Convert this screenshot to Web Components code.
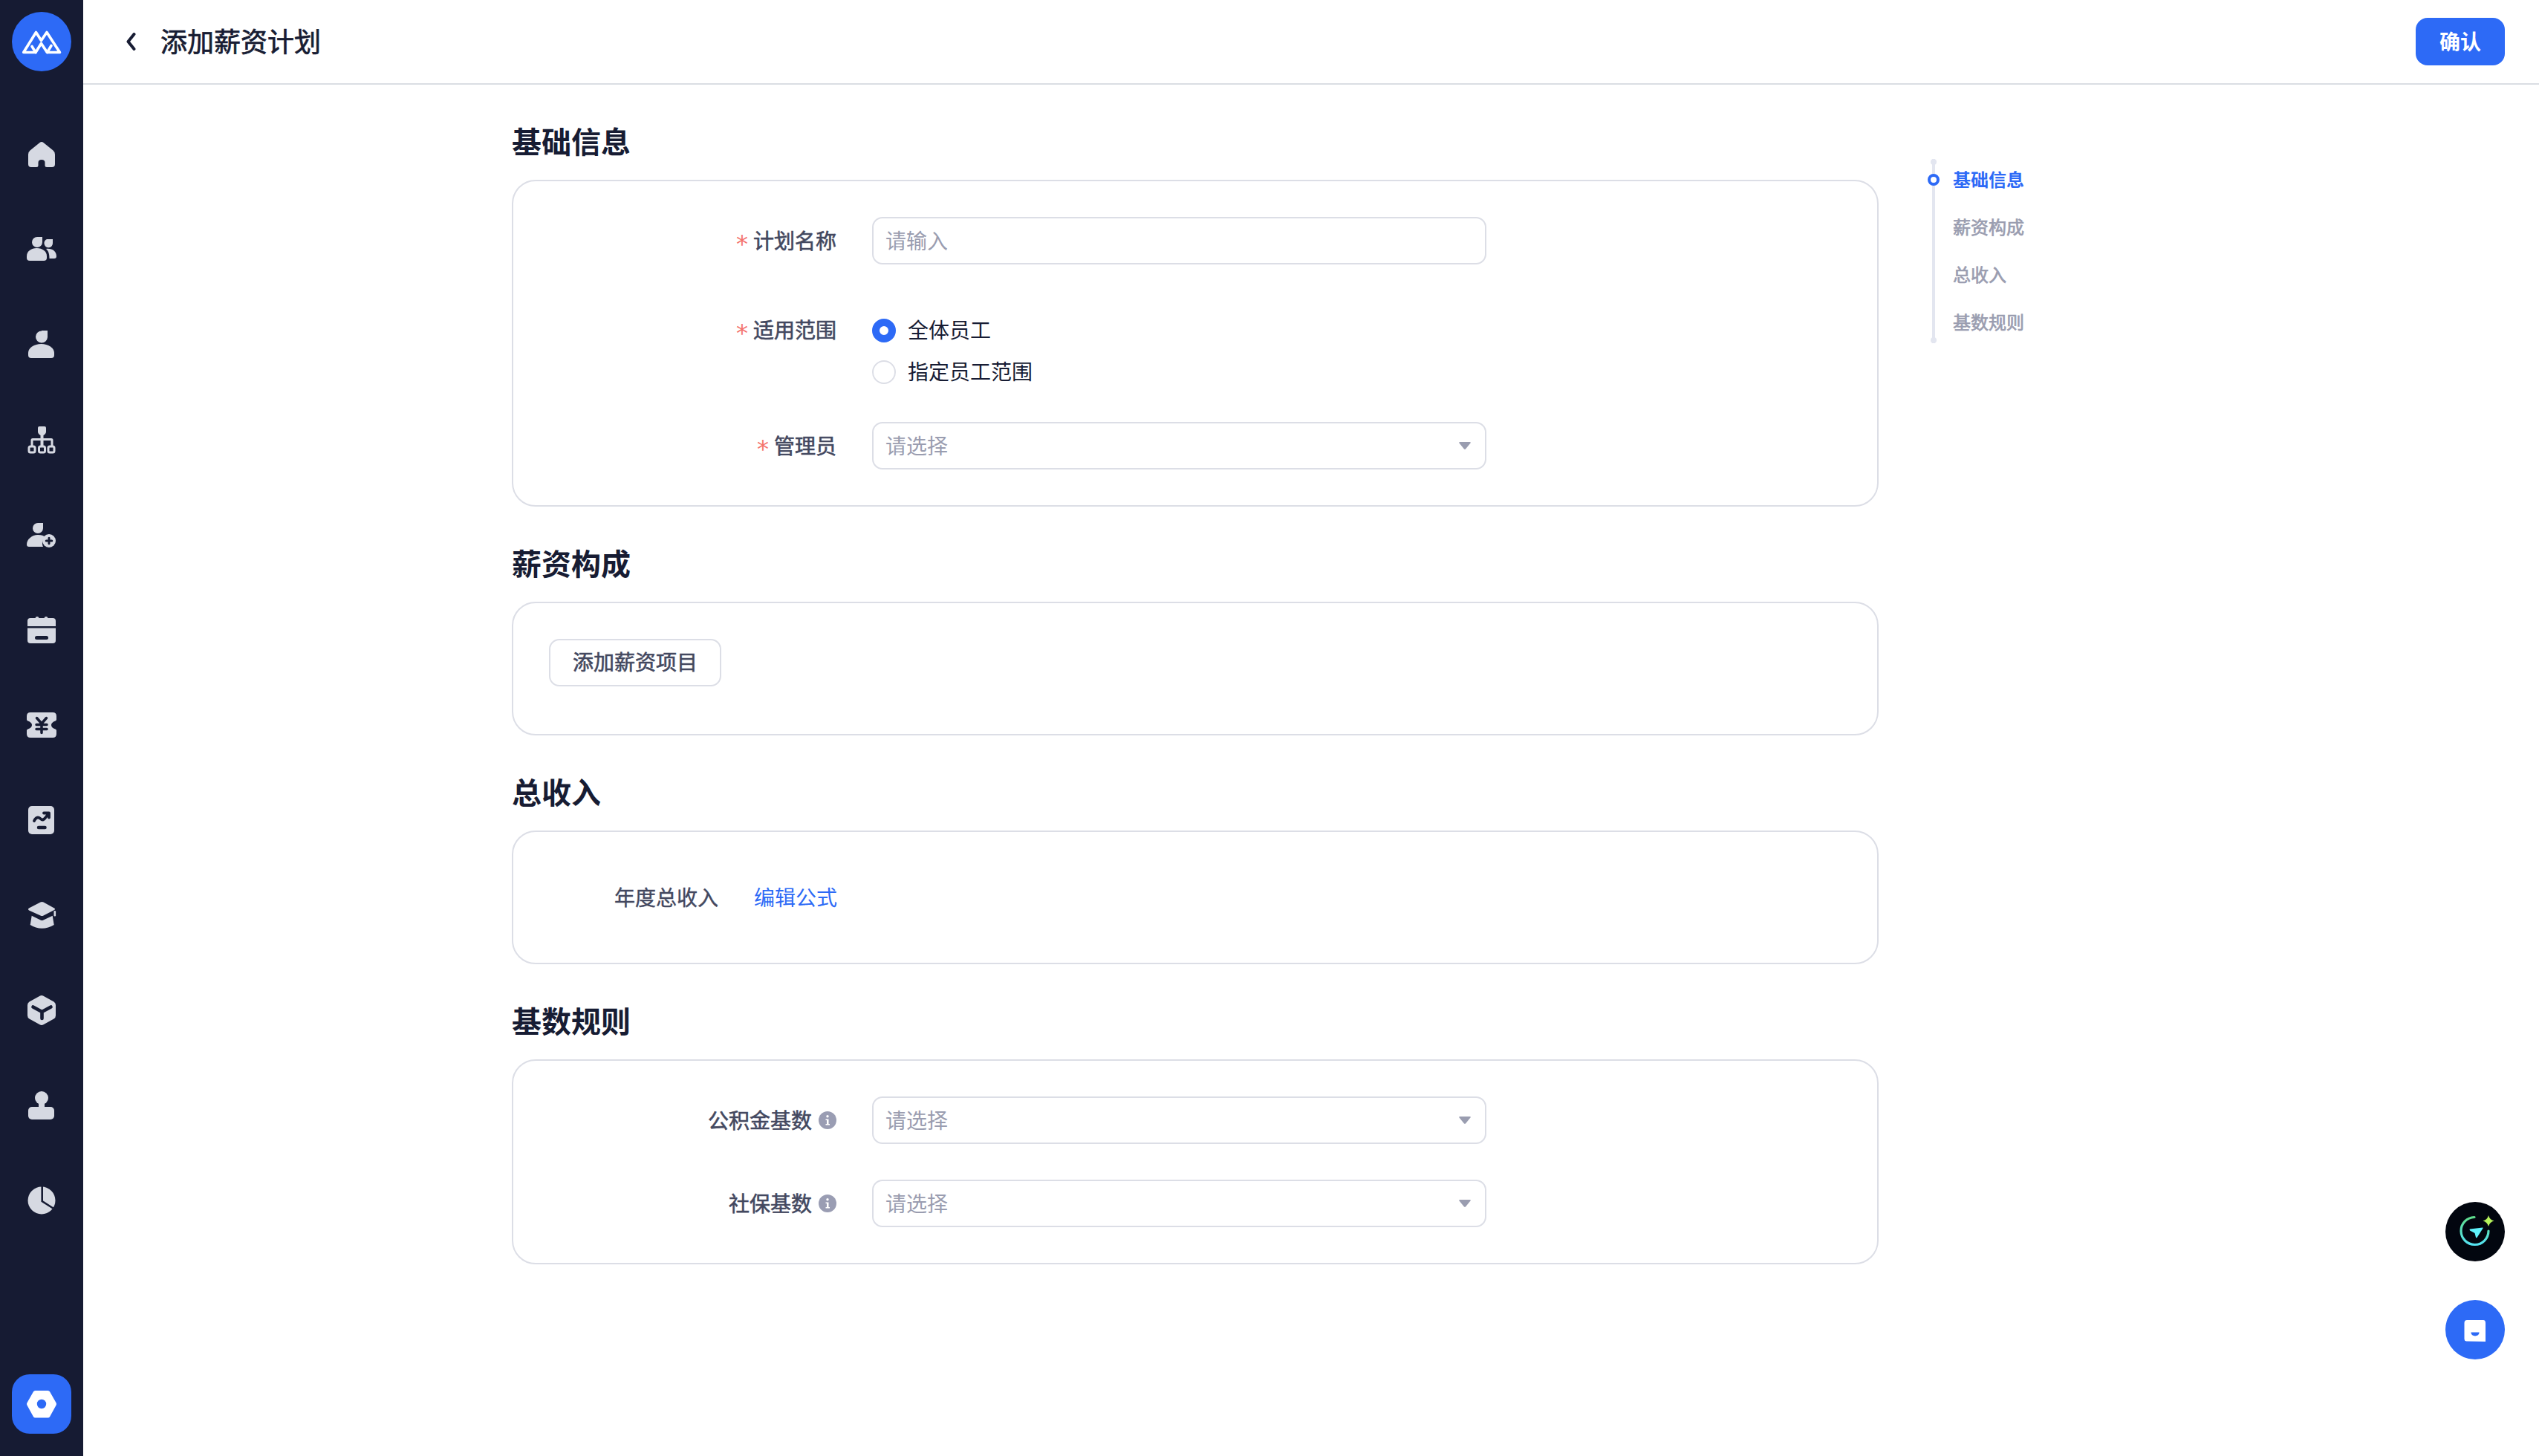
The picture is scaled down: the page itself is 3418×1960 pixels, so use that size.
<!DOCTYPE html>
<html lang="zh"><head><meta charset="utf-8"><title>添加薪资计划</title>
<style>
html,body{margin:0;height:100%;background:#fff}
body{font-family:Inter,"Noto Sans CJK SC","Noto Sans",sans-serif;color:#171c33}
app-shell{height:1960px}
</style></head><body>
<template id="nav-tpl"><style>
:host{display:flex;flex-direction:column;width:112px;height:1960px;background:#161b33;flex:none;align-items:center;box-sizing:border-box;padding-top:16px}
.logo{width:80px;height:80px;border-radius:50%;background:#2d6af6;display:block;flex:none;margin-bottom:48px}
nav{display:flex;flex-direction:column;flex:1}
.i{width:112px;height:128px;display:flex;align-items:center;justify-content:center;flex:none}
svg.ic{width:48px;height:48px;display:block;fill:#d6d9e2}
.d{stroke:#161b33;fill:none;stroke-linecap:round;stroke-linejoin:round}
.set{width:80px;height:80px;border-radius:24px;background:#2d6af6;display:flex;align-items:center;justify-content:center;margin-bottom:30px;flex:none}
</style>
<svg class="logo" viewBox="0 0 80 80" fill="none" stroke="#fff" stroke-width="3.600" stroke-linejoin="round" stroke-linecap="round"><path d="M15.700 54.500 32.500 27.500 39.500 38.500 47 27.500 64.500 54.500H47.500L39.500 42.500 32 54.500Z"/><path d="M47.500 54.500 53 45.500M32 54.500 27 46.500"/></svg>
<nav>
<div class="i"><svg class="ic" viewBox="0 0 48 48"><path d="M21.500 7.900Q24 6 26.500 7.900L39.500 18.600Q42 20.700 42 24V37Q42 41 38 41H31Q28.500 41 28.500 38.500V35Q28.500 31 24 31T19.500 35V38.500Q19.500 41 17 41H10Q6 41 6 37V24Q6 20.700 8.500 18.600Z"/></svg></div>
<div class="i"><svg class="ic" viewBox="0 0 48 48"><path d="M18 7H25V14A7 7 0 1 1 18 7Z"/><path d="M4 33C4 26 10 22 17.500 22S31 26 31 33V35Q31 39 27 39H8Q4 39 4 35Z"/><path d="M31 10H39V15A5.500 5.500 0 0 1 27.500 16 6 6 0 0 1 31 10Z"/><path d="M30 23C38 22 44 26 44 33Q44 36 41 36H34.500C34.500 30 33.500 26 30 23Z"/></svg></div>
<div class="i"><svg class="ic" viewBox="0 0 48 48"><path d="M24 5H32V14A8 8 0 1 1 24 5.500Z"/><path d="M6 35C6 28 14 23 23.500 23S41 28 41 35V38Q41 42 37 42H10Q6 42 6 38Z"/></svg></div>
<div class="i"><svg class="ic" viewBox="0 0 48 48"><path d="M21 6H28Q30 6 30 8V13Q30 16 26.500 18V22H37Q39.500 22 39.500 24.500V32H36.500V25H26.500V32H22.500V25H12.500V32H9.500V24.500Q9.500 22 12 22H22.500V18Q19 16 19 13V8Q19 6 21 6Z"/><g fill="none" stroke="#d6d9e2" stroke-width="3"><rect x="7" y="33" width="8" height="8" rx="2"/><rect x="20.500" y="33" width="8" height="8" rx="2"/><rect x="33" y="33" width="8" height="8" rx="2"/></g></svg></div>
<div class="i"><svg class="ic" viewBox="0 0 48 48"><path d="M19 8H26V15A7 7 0 1 1 19 8Z"/><path d="M4 37C4 30 11 24 19 24 24 24 27 25 28.500 27 25 30 24 35 26 40H7Q4 40 4 37Z"/><circle cx="34" cy="32" r="9"/><path class="d" stroke-width="3" d="M34 28.200V35.800M30.200 32H37.800"/></svg></div>
<div class="i"><svg class="ic" viewBox="0 0 48 48"><path d="M5 19V12Q5 8 9 8H15.500Q16 6 18 6T20.500 8H27.500Q28 6 30 6T32.500 8H39Q43 8 43 12V19Z"/><path d="M5 21.500H43V38Q43 42 39 42H9Q5 42 5 38Z"/><path class="d" stroke-width="5" d="M17.500 34.500H30.500"/></svg></div>
<div class="i"><svg class="ic" viewBox="0 0 48 48"><path d="M9 7H39Q44 7 44 12V16.500Q44 18 42.500 18.500 37 20.500 37 24T42.500 29.500Q44 30 44 31.500V36Q44 41 39 41H9Q4 41 4 36V31.500Q4 30 5.500 29.500 11 27.500 11 24T5.500 18.500Q4 18 4 16.500V12Q4 7 9 7Z"/><path class="d" stroke-width="3.500" d="M17.500 14.500 24 22 30.500 14.500M17 23.500H31M17 29.500H31M24 22V34.500"/></svg></div>
<div class="i"><svg class="ic" viewBox="0 0 48 48"><rect x="6" y="5" width="35" height="38" rx="5"/><path class="d" stroke-width="3.800" d="M14 25C16.500 19.500 20 19.500 23 22.500S28.500 22 33 15.500M27 14.500H34V20.500"/><path class="d" stroke-width="4.500" d="M20 34H28.500"/></svg></div>
<div class="i"><svg class="ic" viewBox="0 0 48 48"><path d="M22.500 6.600Q24.500 5.600 26.500 6.600L41 14.400Q43 15.600 41 17L26.500 24.500Q24.500 25.700 22.500 24.500L7 17.500Q5 16 7 14.500Z"/><path d="M10.700 24.800 22.500 30.500Q24.500 31.500 26.500 30.500L38.700 24.800 40.700 37Q33 41.700 24.500 41.700T8.700 37Z"/><rect x="40.500" y="18" width="2.600" height="7.500" rx="1.200"/></svg></div>
<div class="i"><svg class="ic" viewBox="0 0 48 48"><path d="M21.500 4.800Q24 3.400 26.500 4.800L40.500 12.500Q43 14 43 17V31Q43 34 40.500 35.500L26.500 43.200Q24 44.600 21.500 43.200L7.500 35.500Q5 34 5 31V17Q5 14 7.500 12.500Z"/><path class="d" stroke-width="4.600" d="M12.500 19.500 24.500 26 36.500 19.500M24.500 26V35"/></svg></div>
<div class="i"><svg class="ic" viewBox="0 0 48 48"><circle cx="24" cy="14" r="9"/><rect x="20" y="20" width="8" height="8"/><rect x="6" y="26" width="35" height="17" rx="5"/></svg></div>
<div class="i"><svg class="ic" viewBox="0 0 48 48"><circle cx="24" cy="24" r="18.500"/><path class="d" stroke-width="2.600" style="stroke-linecap:butt;stroke-linejoin:miter" d="M24.700 5V25L39.500 34.500"/></svg></div>
</nav>
<div class="set"><svg width="48" height="48" viewBox="0 0 48 48"><path fill="#fff" stroke="#fff" stroke-width="6" stroke-linejoin="round" d="M7 24 15.500 9H32.500L41 24 32.500 39.500H15.500Z"/><circle cx="24" cy="24" r="6.200" fill="#2d6af6"/></svg></div>
</template>

<template id="bar-tpl"><style>
:host{display:flex;align-items:center;height:114px;box-sizing:border-box;border-bottom:2px solid #dadee3;padding:0 46px 0 58px;flex:none}
svg{display:block;flex:none;margin-right:33px}
h1{font:400 36px/56px Inter,"Noto Sans CJK SC",sans-serif;-webkit-text-stroke:.7px #171c33;color:#171c33;margin:0;padding-top:1px;flex:1}
button{width:120px;height:64px;border:0;border-radius:16px;background:#2d6af6;color:#fff;font:600 28px/64px Inter,"Noto Sans CJK SC",sans-serif;padding:1px 0 0}
</style>
<svg width="13" height="24" viewBox="0 0 13 24" fill="none" stroke="#171c33" stroke-width="4" stroke-linecap="round" stroke-linejoin="round"><path d="M10.500 2 2.500 12 10.500 22"/></svg>
<h1><slot></slot></h1><button>确认</button></template>

<template id="sec-tpl"><style>
:host{display:block;width:1840px;margin-bottom:48px}
h2{font:600 40px/60px Inter,"Noto Sans CJK SC",sans-serif;color:#171c33;margin:0 0 24px;height:56px}
.c{border:2px solid #dcdee6;border-radius:32px;padding:48px;box-sizing:border-box;background:#fff}
</style><h2></h2><div class="c"><slot></slot></div></template>

<template id="row-tpl"><style>
:host{display:flex;align-items:center;min-height:64px}
.l{width:387px;margin-right:47px;flex:none;display:flex;justify-content:flex-end;align-items:center;font:400 28px/44px Inter,"Noto Sans CJK SC",sans-serif;-webkit-text-stroke:.6px #43485f;color:#43485f;white-space:nowrap}
.s{color:#f4736c;-webkit-text-stroke:0;font:400 32px/44px "DejaVu Sans",sans-serif;margin-right:7px;transform:translateY(4px)}
.t{display:block;transform:translateY(1px)}
.info{width:24px;height:24px;margin-left:9px;display:block}
.f{flex:none;margin-left:1px}
:host([top]){align-items:flex-start}
:host([top]) .l{height:54px}
</style><div class="l"><span class="s">*</span><span class="t"></span><svg class="info" viewBox="0 0 24 24"><circle cx="12" cy="12" r="12" fill="#9a9db3"/><circle cx="12" cy="6.800" r="1.700" fill="#fff"/><path d="M9.500 10.500H13.500V17H15V18.500H9.500V17H11V12H9.500Z" fill="#fff"/></svg></div><div class="f"><slot></slot></div></template>

<template id="inp-tpl"><style>
:host{display:block;width:827px;height:64px;border:2px solid #dcdee6;border-radius:14px;box-sizing:border-box;position:relative;background:#fff}
.p{display:block;font:400 28px/62px Inter,"Noto Sans CJK SC",sans-serif;color:#9a9db0;padding-left:16px;height:60px}
svg{position:absolute;right:19px;top:25px;display:none}
:host([select]) svg{display:block}
</style><span class="p"><slot></slot></span><svg width="16" height="10" viewBox="0 0 16 10"><path d="M1.500 0H14.500Q16.500 0 15.500 1.500L9.200 9.300Q8 10.400 6.800 9.300L.5 1.500Q-.5 0 1.500 0Z" fill="#9a9db0"/></svg></template>

<template id="radio-tpl"><style>
:host{display:flex;align-items:center;height:56px;font:400 28px/56px Inter,"Noto Sans CJK SC",sans-serif;color:#171c33}
i{width:32px;height:32px;box-sizing:border-box;border:2px solid #dcdee6;border-radius:50%;margin-right:16px;flex:none;display:block}
:host([on]) i{border:10px solid #2d6af6}
span{display:block}
</style><i></i><span><slot></slot></span></template>

<template id="anc-tpl"><style>
:host{display:block;position:absolute;left:2599px;top:214px;width:140px;height:248px}
.l{position:absolute;left:2px;top:0;width:4px;height:248px;background:#e3e6f0}
.l::before,.l::after{content:"";position:absolute;left:-2px;width:8px;height:8px;border-radius:50%;background:#e3e6f0}
.l::before{top:0}.l::after{bottom:0}
.dot{position:absolute;left:-4px;top:20px;width:16px;height:16px;box-sizing:border-box;border:4.500px solid #2d6af6;border-radius:50%;background:#fff}
ul{list-style:none;margin:0;padding:0;position:absolute;left:30px;top:-4px}
li{height:64px;font:400 24px/66px Inter,"Noto Sans CJK SC",sans-serif;-webkit-text-stroke:.7px #9a9db0;color:#9a9db0;white-space:nowrap}
li:first-child{color:#2d6af6;font-weight:700;-webkit-text-stroke:0}
</style><div class="l"></div><div class="dot"></div><ul><li>基础信息</li><li>薪资构成</li><li>总收入</li><li>基数规则</li></ul></template>

<template id="fab-tpl"><style>
:host{display:flex;position:absolute;width:80px;height:80px;border-radius:50%;align-items:center;justify-content:center}
svg{display:block}
</style><slot></slot></template>

<template id="shell-tpl"><style>
:host{display:flex;position:relative;width:3418px;height:1960px;overflow:hidden;background:#fff}
.m{flex:1;display:flex;flex-direction:column;min-width:0}
.b{padding:48px 0 0 577px}
</style><slot name="nav"></slot><div class="m"><slot name="bar"></slot><div class="b"><slot></slot></div></div><slot name="over"></slot></template>

<app-shell>
<side-nav slot="nav"></side-nav>
<top-bar slot="bar">添加薪资计划</top-bar>

<form-section heading="基础信息">
  <form-row label="计划名称" req><text-box>请输入</text-box></form-row>
  <form-row label="适用范围" req top style="margin-top:61px;margin-bottom:39px"><div><radio-opt on>全体员工</radio-opt><radio-opt>指定员工范围</radio-opt></div></form-row>
  <form-row label="管理员" req><text-box select>请选择</text-box></form-row>
</form-section>

<form-section heading="薪资构成">
  <plain-btn>添加薪资项目</plain-btn>
</form-section>

<form-section heading="总收入">
  <link-row label="年度总收入">编辑公式</link-row>
</form-section>

<form-section heading="基数规则">
  <form-row label="公积金基数" info style="margin-bottom:48px"><text-box select>请选择</text-box></form-row>
  <form-row label="社保基数" info><text-box select>请选择</text-box></form-row>
</form-section>

<anchor-nav slot="over"></anchor-nav>
<float-btn slot="over" style="left:3292px;top:1618px;background:#02060f"><svg width="80" height="80" viewBox="0 0 80 80" fill="none"><defs><linearGradient id="g" x1="0" y1="0" x2="0" y2="1"><stop offset="0" stop-color="#5fdc8c"/><stop offset="1" stop-color="#55e3f2"/></linearGradient></defs><path d="M39 20.500A18.500 18.500 0 1 0 58 39" stroke="url(#g)" stroke-width="3.200" stroke-linecap="round"/><path d="M58 18Q59.500 24 65.500 25.500 59.500 27 58 33 56.500 27 50.500 25.500 56.500 24 58 18Z" fill="#b6f25c"/><path d="M33 36.500 50 34.500Q51 34.500 50.500 35.500L42.500 48Q41.500 49 41 47.800L39.500 42 33 38.500Q32 37 33 36.500Z" fill="#5ff2fb"/></svg></float-btn>
<float-btn slot="over" style="left:3292px;top:1750px;background:#2d6af6"><svg width="80" height="80" viewBox="0 0 80 80"><path d="M29 27H51Q54 27 54 31V56L28 55.500Q25.500 55 25.500 52V31Q25.500 27 29 27Z" fill="#fff"/><path d="M34.500 43.500H45.500C45.500 50 34.500 50 34.500 43.500Z" fill="#2d6af6"/></svg></float-btn>
</app-shell>

<script>
function mk(name,tpl,init){
  customElements.define(name,class extends HTMLElement{
    constructor(){super();this.attachShadow({mode:'open'}).appendChild(document.getElementById(tpl).content.cloneNode(true));}
    connectedCallback(){if(init)init.call(this,this.shadowRoot);}
  });
}
mk('side-nav','nav-tpl');
mk('top-bar','bar-tpl');
mk('form-section','sec-tpl',function(r){r.querySelector('h2').textContent=this.getAttribute('heading');});
mk('form-row','row-tpl',function(r){
  r.querySelector('.t').textContent=this.getAttribute('label');
  if(!this.hasAttribute('req'))r.querySelector('.s').remove();
  if(!this.hasAttribute('info'))r.querySelector('.info').remove();
});
mk('text-box','inp-tpl');
mk('radio-opt','radio-tpl');
mk('anchor-nav','anc-tpl');
mk('float-btn','fab-tpl');
mk('app-shell','shell-tpl');
customElements.define('plain-btn',class extends HTMLElement{constructor(){super();this.attachShadow({mode:'open'}).innerHTML=`<style>:host{display:block;height:80px}button{width:232px;height:64px;box-sizing:border-box;border:2px solid #dcdee6;border-radius:14px;background:#fff;color:#43485f;font:400 28px/60px Inter,"Noto Sans CJK SC",sans-serif;-webkit-text-stroke:.6px #43485f;padding:0}</style><button><slot></slot></button>`;}});
customElements.define('link-row',class extends HTMLElement{constructor(){super();this.attachShadow({mode:'open'}).innerHTML=`<style>:host{display:flex;height:80px;align-items:center;font:400 28px/44px Inter,"Noto Sans CJK SC",sans-serif;padding-top:2px;box-sizing:border-box}.l{margin-left:88px;color:#43485f;width:188px;-webkit-text-stroke:.4px #43485f}a{color:#2d6af6}</style><span class="l"></span><a><slot></slot></a>`;this.shadowRoot.querySelector('.l').textContent=this.getAttribute('label');}});
</script>
</body></html>
